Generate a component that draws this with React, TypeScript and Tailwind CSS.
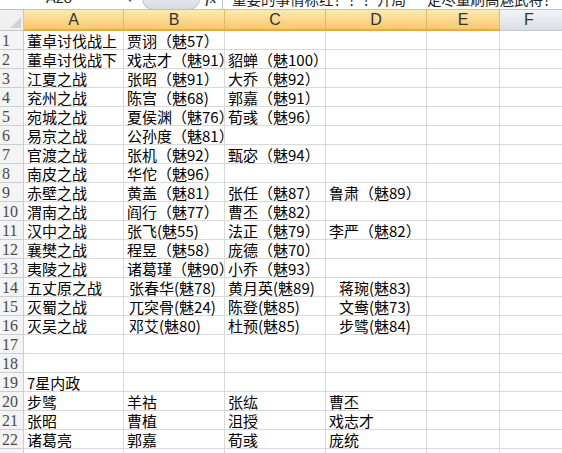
import React from 'react';

const rows: string[][] = [
  ['董卓讨伐战上', '贾诩（魅57）', '', ''],
  ['董卓讨伐战下', '戏志才（魅91）', '貂蝉（魅100）', ''],
  ['江夏之战', '张昭（魅91）', '大乔（魅92）', ''],
  ['兖州之战', '陈宫（魅68)', '郭嘉（魅91）', ''],
  ['宛城之战', '夏侯渊（魅76）', '荀彧（魅96）', ''],
  ['易京之战', '公孙度（魅81）', '', ''],
  ['官渡之战', '张机（魅92）', '甄宓（魅94）', ''],
  ['南皮之战', '华佗（魅96）', '', ''],
  ['赤壁之战', '黄盖（魅81）', '张任（魅87）', '鲁肃（魅89）'],
  ['渭南之战', '阎行（魅77）', '曹丕（魅82）', ''],
  ['汉中之战', '张飞(魅55)', '法正（魅79）', '李严（魅82）'],
  ['襄樊之战', '程昱（魅58）', '庞德（魅70）', ''],
  ['夷陵之战', '诸葛瑾（魅90）', '小乔（魅93）', ''],
  ['五丈原之战', '张春华(魅78)', '黄月英(魅89)', '蒋琬(魅83)'],
  ['灭蜀之战', '兀突骨(魅24)', '陈登(魅85)', '文鸯(魅73)'],
  ['灭吴之战', '邓艾(魅80)', '杜预(魅85)', '步骘(魅84)'],
  ['', '', '', ''],
  ['', '', '', ''],
  ['7星内政', '', '', ''],
  ['步骘', '羊祜', '张纮', '曹丕'],
  ['张昭', '曹植', '沮授', '戏志才'],
  ['诸葛亮', '郭嘉', '荀彧', '庞统'],
  ['', '', '', ''],
];

const cols = ['A', 'B', 'C', 'D', 'E'];
const cell = 'h-[19px] border-r border-b border-[#d9d9d9] bg-white whitespace-nowrap leading-[19px] text-[15px] text-black';

const App: React.FC = () => (
  <div
    className="w-[562px] h-[453px] overflow-hidden bg-white"
    style={{ fontFamily: '"Noto Sans CJK SC", sans-serif' }}
  >
    {/* formula bar, cut off at the top */}
    <div className="h-[10px] overflow-hidden border-b border-[#b7c3d1] bg-white">
      <div className="-mt-[11px] h-[20px] flex items-center text-[14.5px] text-[#222] whitespace-nowrap">
        <div className="w-[118px] flex justify-center" style={{ fontFamily: '"Liberation Sans", sans-serif' }}>A28</div>
        <div className="w-[24px] text-[9px] text-[#555] text-center">▼</div>
        <div className="w-[58px] h-[22px] rounded-full bg-linear-to-b from-[#f4f6f8] to-[#d6dbe1] border border-[#b9c2cc]" />
        <div className="w-[22px] italic font-bold text-[#444] text-[13px] text-center" style={{ fontFamily: '"Liberation Serif", serif' }}>fx</div>
        <div className="flex-1 h-[20px] border-l border-[#b7c3d1] pl-[9px] leading-[20px]">重要的事情标红！！！开局&nbsp;&nbsp;一定尽量刷高魅武将！</div>
      </div>
    </div>

    <div className="grid grid-cols-[24px_100px_101px_101px_101px_73px_1fr]">
      {/* header row */}
      <div className="h-[21px] border-r border-b border-[#c3c9d1] bg-[#f0f0f0] flex items-end justify-end p-[2px]">
        <div className="w-0 h-0 border-l-[11px] border-l-transparent border-b-[11px] border-b-[#cfd3d8]" />
      </div>
      {cols.map((c) => (
        <div
          key={c}
          className="h-[21px] border-r border-b-2 border-r-[#e3b865] border-b-[#f2a93b] bg-linear-to-b from-[#fde9b6] to-[#f7c867] flex items-center justify-center text-[16px] text-[#333]"
          style={{ fontFamily: '"Liberation Sans", sans-serif' }}
        >
          {c}
        </div>
      ))}
      <div
        className="h-[21px] border-b border-[#c3c9d1] bg-linear-to-b from-[#f3f5f8] to-[#d9dee5] flex items-center text-[16px] text-[#333] pl-[24px]"
        style={{ fontFamily: '"Liberation Sans", sans-serif' }}
      >
        F
      </div>

      {rows.map((r, i) => (
        <React.Fragment key={i}>
          <div
            className="h-[19px] border-r border-b border-[#c9ced6] bg-[#f4f4f4] pl-[2px] text-[16px] leading-[19px] text-[#4a4a4a]"
            style={{ fontFamily: '"Liberation Serif", serif' }}
          >
            {i + 1}
          </div>
          <div className={`${cell} pl-[3px]`}>{r[0]}</div>
          <div className={`${cell} ${i >= 13 && i <= 15 ? 'pl-[5px]' : 'pl-[3px]'}`}>{r[1]}</div>
          <div className={`${cell} pl-[3px]`}>{r[2]}</div>
          <div className={`${cell} ${i >= 13 && i <= 15 ? 'pl-[13px]' : 'pl-[3px]'}`}>{r[3]}</div>
          <div className={cell} />
          <div className="h-[19px] border-b border-[#d9d9d9] bg-white" />
        </React.Fragment>
      ))}
    </div>
  </div>
);

export default App;
